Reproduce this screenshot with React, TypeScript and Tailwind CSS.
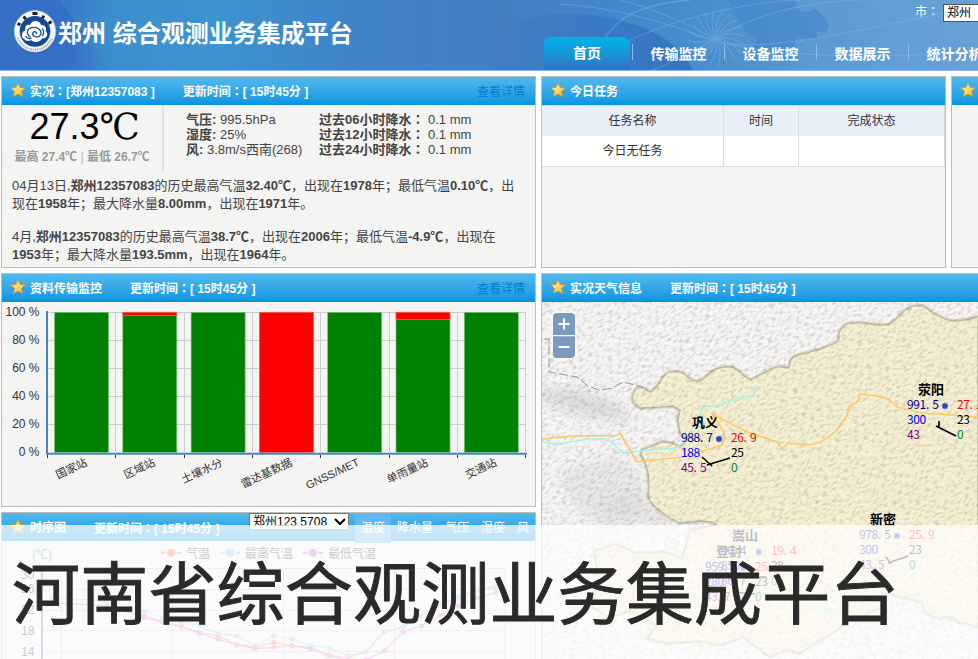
import React from "react";

const SANS = "font-['Liberation_Sans','Noto_Sans_CJK_SC',sans-serif]";

function Star() {
  return (
    <svg width="16" height="16" viewBox="0 0 16 16" className="shrink-0">
      <defs>
        <linearGradient id="star" x1="0" y1="0" x2="0.6" y2="1">
          <stop offset="0" stopColor="#fff2a8" />
          <stop offset="1" stopColor="#f5c544" />
        </linearGradient>
      </defs>
      <path
        d="M8 0.8 L10.2 5.5 L15.3 6 L11.5 9.4 L12.7 14.5 L8 12 L3.3 14.5 L4.5 9.4 L0.7 6 L5.8 5.5 Z"
        fill="url(#star)"
        stroke="#d09a35"
        strokeWidth="1"
        strokeLinejoin="round"
      />
    </svg>
  );
}

function Logo() {
  return (
    <svg width="44" height="46" viewBox="0 0 44 46" className="shrink-0">
      <circle cx="22.5" cy="24" r="20.6" fill="#1d4f9c" opacity="0.45" />
      <circle cx="22" cy="22.3" r="20.7" fill="#f4f6f6" stroke="#b9c9d4" strokeWidth="0.8" />
      <path d="M5 29 A18.2 18.2 0 0 0 39 29" fill="none" stroke="#6b7280" strokeWidth="2" strokeDasharray="1.2 1" opacity="0.6" />
      <g fill="none" stroke="#1a1f28" strokeWidth="2.8">
        <path d="M4.5 14.5 l3 1.5 M10.5 7.5 l2.4 2.6 M19.5 4.5 h5 M31 6.8 l-2 3 M38.5 12.5 l-3 2" />
      </g>
      <circle cx="22" cy="22.3" r="15.4" fill="#134a9b" />
      <path
        d="M11 30 C7.5 28 8.5 22 12.5 21.5 C11.5 17 14 15 17 16 C18.5 10.5 27 10.5 28 16 C33 15.5 34 20 32.5 22 C36 24.5 34 30 29 29.5 C27.5 33.5 20.5 34 18 31 C15.5 32.5 13 32 11 30 Z"
        fill="#fff"
      />
      <path
        d="M17 28 C12 24 15 18 21 18.3 C27 18.5 30 24 26.5 27 C23.5 29.5 18.5 27 20 23.7 C21 22 24 22.6 23.5 24.6 M13 27.5 C14 29 16 29.8 18 29.5 M29.5 20 C31 21.5 31 25 29.5 26.8"
        fill="none" stroke="#134a9b" strokeWidth="1.3" strokeLinecap="round"
      />
    </svg>
  );
}

function HeaderArt() {
  const rays = [0, 18, 36, 54, 72, 90, 108, 126, 144, 162, 180, 198, 216, 234, 252, 270, 288, 306, 324, 342];
  return (
    <svg width="978" height="70" viewBox="0 0 978 70" className="absolute inset-0">
      <defs>
        <linearGradient id="hd" x1="0" x2="1">
          <stop offset="0" stopColor="#3471c5" />
          <stop offset="0.07" stopColor="#3470c6" />
          <stop offset="0.11" stopColor="#3a8acb" />
          <stop offset="0.22" stopColor="#3d94cf" />
          <stop offset="0.38" stopColor="#3f82c5" />
          <stop offset="0.52" stopColor="#4280c2" />
          <stop offset="0.65" stopColor="#4289cb" />
          <stop offset="0.82" stopColor="#5497d0" />
          <stop offset="1" stopColor="#659fd4" />
        </linearGradient>
        <linearGradient id="globe" x1="480" x2="693" gradientUnits="userSpaceOnUse">
          <stop offset="0" stopColor="#2865b8" stopOpacity="0" />
          <stop offset="1" stopColor="#2865b8" stopOpacity="0.62" />
        </linearGradient>
      </defs>
      <rect width="978" height="70" fill="url(#hd)" />
      <path d="M60 0 L110 70 L230 70 L140 0 Z" fill="#3e97d2" opacity="0.3" />
      <path d="M480 40 C520 14 560 10 600 16 C650 24 680 44 693 70 L480 70 Z" fill="url(#globe)" />
      <path
        d="M795 0 L796 10 L808 12 L816 9 L824 18 L829 26 L826 33 L817 31 L817 38 L803 40 L797 36 L795 46 L784 48 L786 58 L776 60 L770 50 L759 58 L752 48 L758 39 L748 34 L727 0 Z"
        fill="#377bc8" opacity="0.32"
      />
      <path d="M797 38 L790 70 L978 70 L978 0 L797 0 L800 11 L808 12 L816 9 L824 18 L829 26 L826 33 L817 31 L817 38 L803 40 Z" fill="#7ab0dd" opacity="0.16" />
      <g stroke="#9ccbeb" fill="none" opacity="0.3">
        <path d="M590 70 C606 20 632 5 690 0" strokeWidth="1.3" />
        <path d="M560 4 C620 8 670 24 712 40 S860 30 978 6" />
        <path d="M620 0 C660 10 700 30 716 40 C760 55 850 60 978 52" />
        <path d="M600 58 C650 20 760 0 800 0 M716 40 C690 50 660 70 650 70 M716 40 C760 5 850 -2 880 0" />
        {rays.map((a) => (
          <path key={a} d="M716 38 q14 -7 28 -2" transform={`rotate(${a} 716 38)`} />
        ))}
      </g>
    </svg>
  );
}

function TitleBar({ title, time, gap, link }: { title: string; time?: string; gap?: string; link?: boolean }) {
  return (
    <div className="flex h-7 shrink-0 items-center bg-linear-to-b from-[#50b9ee] to-[#0095df] pl-2 pr-[10px] font-['Liberation_Sans','Noto_Sans_CJK_SC',sans-serif] text-[12px] font-bold whitespace-pre text-white">
      <span className="-mt-[2px]"><Star /></span>
      <span className="ml-1 pt-px">{colon(title)}</span>
      {time && <span className={`${gap} pt-px`}>{colon(time)}</span>}
      {link && <span className="ml-auto pt-px font-normal text-[#007fd0]">查看详情</span>}
    </div>
  );
}

// Sets the full-width colon centred in its cell.
function colon(text: string) {
  const [a, b] = text.split("：");
  if (b === undefined) return text;
  return <>{a}<span lang="zh-TW" className="font-['Noto_Sans_CJK_TC',sans-serif]">：</span>{b}</>;
}

const PANEL = "flex flex-col overflow-hidden border border-[#bcbcb8] bg-[#f4f4f2]";

const NAV = ["传输监控", "设备监控", "数据展示", "统计分析"];

const BARS = [
  { label: "国家站", red: 0, x: 88 },
  { label: "区域站", red: 3, x: 156 },
  { label: "土壤水分", red: 0, x: 223.5 },
  { label: "雷达基数据", red: 141, x: 293 },
  { label: "GNSS/MET", red: 0, x: 360 },
  { label: "单雨量站", red: 7, x: 429 },
  { label: "交通站", red: 0, x: 497.5 },
];

function BarChart() {
  return (
    <svg width="533" height="204" viewBox="2 302 533 204" className="font-['Liberation_Sans','Noto_Sans_CJK_SC',sans-serif]">
      <g stroke="#ccc" shapeRendering="crispEdges">
        {[0, 1, 2, 3, 4].map((i) => (
          <path key={i} d={`M48 ${312.5 + i * 28} H526`} />
        ))}
        {[1, 2, 3, 4, 5, 6, 7].map((i) => (
          <path key={i} d={`M${Math.round(47 + i * 68.3) + 0.5} 312 V452`} />
        ))}
      </g>
      {BARS.map((b, i) => {
        const x = 54.5 + i * 68.3;
        return (
          <g key={b.label}>
            <rect x={x} y="312.3" width="54" height="140" fill="#008000" stroke="#7fc07f" strokeWidth="0.7" />
            {b.red > 0 && <rect x={x} y="312.3" width="54" height={Math.min(b.red, 140)} fill="#f00" stroke="#f66" strokeWidth="0.7" />}
          </g>
        );
      })}
      <path d="M47 311 V454 M46 453.8 H527" stroke="#4488bb" strokeWidth="2" />
      <g stroke="#333" shapeRendering="crispEdges">
        {[0, 1, 2, 3, 4, 5, 6, 7].map((i) => (
          <path key={i} d={`M${Math.round(47 + i * 68.3) + 0.5} 455 v3`} />
        ))}
      </g>
      {[100, 80, 60, 40, 20, 0].map((v, i) => (
        <text key={v} x="39.5" y={316 + i * 28} textAnchor="end" fontSize="12" fill="#333">{v} %</text>
      ))}
      {BARS.map((b) => (
        <text key={b.label} x={b.x} y="465" textAnchor="end" fontSize="11" fill="#333" transform={`rotate(-25 ${b.x} 465)`}>{b.label}</text>
      ))}
    </svg>
  );
}

const MAXT = [597.7, 599, 600, 602, 605, 611, 618, 622, 626, 633.3, 635.7, 645.7, 635.7, 639, 645.7, 647.7, 655.7, 651.7, 631.3, 626.7, 615, 604.3, 596.7, 590, 585.7, 583.3, 584];
const MINT = [603.3, 604, 605, 606, 611.7, 617.7, 622.3, 626.7, 633.3, 639.3, 645, 648.7, 647.3, 645.7, 649, 655.7, 660, 660, 650.7, 631.7, 626, 615, 606, 598, 592.5, 589, 585.7];
const AVGT = [603, 603.5, 604.5, 605.5, 611, 616, 621, 626, 633, 635.7, 644.7, 647, 642.7, 645.7, 647.7, 655, 658, 652, 631.7, 627, 615.5, 605, 597.5, 591, 587, 584.7, 584.3];

function Series({ data, color }: { data: number[]; color: string }) {
  const x = (i: number) => 51.6 + i * 18.5;
  const pts = data.slice(0, 25).map((y, i) => [x(i), y] as const);
  return (
    <g stroke={color} fill="none">
      <polyline points={pts.map((p) => p.join(",")).join(" ")} strokeWidth="1.2" />
      {pts.filter((_, i) => i % 3 === 0 || i > 4).map(([px, py]) => (
        <circle key={px} cx={px} cy={py} r="2.1" fill={color} />
      ))}
    </g>
  );
}

function TempChart() {
  const legend: [string, number, string][] = [["气温", 161, "#ff6b35"], ["最高气温", 220, "#7cc4f5"], ["最低气温", 303, "#cf4fc5"]];
  return (
    <svg width="533" height="118" viewBox="2 541 533 118" className="font-['Liberation_Sans','Noto_Sans_CJK_SC',sans-serif]">
      <g stroke="#ccc" shapeRendering="crispEdges">
        {[568.5, 589.5, 610.5, 630.5, 651.5].map((y) => <path key={y} d={`M42 ${y} H505`} />)}
        {[61.5, 172.5, 283.5, 394.5, 505.5].map((x) => <path key={x} d={`M${x} 568 V659`} />)}
      </g>
      <path d="M42 568 V659" stroke="#4488bb" strokeWidth="2" />
      <text x="32" y="559" fontSize="12" fill="#4488bb">(℃)</text>
      {[["30", 579], ["26", 593], ["22", 614], ["18", 635], ["14", 656]].map(([t, y]) => (
        <text key={t} x="34.5" y={y} fontSize="12" textAnchor="end" fill="#333">{t}</text>
      ))}
      <Series data={AVGT} color="#ff7f50" />
      <Series data={MAXT} color="#87cefa" />
      <Series data={MINT} color="#da70d6" />
      {legend.map(([t, x, c]) => (
        <g key={t}>
          <path d={`M${x} 552.7 h20`} stroke={c} strokeWidth="2" />
          <circle cx={x + 10} cy="552.7" r="5.5" fill="#f4f4f2" />
          <circle cx={x + 10} cy="552.7" r="4" fill={c} />
          <text x={x + 25} y="558" fontSize="12" fill="#333">{t}</text>
        </g>
      ))}
    </svg>
  );
}

function Num({ x, y, t, c }: { x: number; y: number; t: string; c: string }) {
  const xs = t.split("").map((_, i) => x + i * 6.3).join(" ");
  return <text x={xs} y={y} fontSize="12" fill={c}>{t}</text>;
}

function Station(p: { x: number; y: number; name: string; v: string[]; barb: string }) {
  const { x, y, v } = p;
  return (
    <g>
      <text x={x + 11} y={y - 11} fontSize="13" fontWeight="bold" fill="#000">{p.name}</text>
      <Num x={x} y={y + 4} t={v[0]} c="#000080" />
      <Num x={x} y={y + 19} t={v[1]} c="#0000ff" />
      <Num x={x} y={y + 34} t={v[2]} c="#800080" />
      <circle cx={x + 38} cy={y + 1} r="3" fill="#3344bb" stroke="#8a92d8" strokeWidth="0.8" />
      <Num x={x + 50} y={y + 4} t={v[3]} c="#ff0000" />
      <Num x={x + 50} y={y + 19} t={v[4]} c="#000" />
      <Num x={x + 50} y={y + 34} t={v[5]} c="#008040" />
      <path d={p.barb} stroke="#000" strokeWidth="1.6" fill="none" />
    </g>
  );
}

const REGION =
  "M633 402 Q631 394 637 388 Q641 387 645 389 Q650 394 653 390 Q658 386 663 377 Q668 371 673 371.7 Q680 371 684 374 Q692 381 697 381.7 Q703 380 708 375 Q714 369 720 368 Q728 366 733 367.7 Q740 371 743 375 L750 380 Q756 378 760 375 L770 370 Q777 366 782 367 L788 368 Q791 365 790 361 L794 356.7 Q804 354 813 351 Q823 349 830 345 Q839 343 839 338 Q838 332 842 328 Q845 324 850 323.3 Q860 322 870 324 Q882 326 890 324.3 Q897 319 903 312 Q910 306 917 305.7 Q923 305 927 308.3 Q934 315 940 316.7 Q948 321 957 321 Q968 320 978 316.7 V627 L969 624 L960 623 L950 616 L940 618 L925 613 L922 602 L900 597 L883 592 L880 608 L860 617 L846 621 L837 630 L815 643 L800 653 L785 650 L770 657 L750 642 L743 637 L720 645 L700 641 L670 643 L647 639 L657 626 L630 610 L610 618 L593 607 L598 580 L595 550 L602 550 L613 544 L630 550 L633 553 L663 552 L682 558 L688 540 L690 530 L717 525 L712 522 L700 521 L680 523 L670 518 L663 513 L653 505 L648 497 Q650 484 648 473 L645 462 L641 455 L642 450 L652 446 L663 441.7 L672 443 L680 447 L688 440 L680 433 L678 420 L680 410 L673 406 L660 407 L640 408 Z";

function WeatherMap() {
  return (
    <svg width="436" height="357" viewBox="542 302 436 357" className="font-['Noto_Sans_CJK_SC','Noto_Sans',sans-serif]">
      <defs>
        <filter id="relief" x="0" y="0" width="100%" height="100%" colorInterpolationFilters="sRGB">
          <feTurbulence type="fractalNoise" baseFrequency="0.2 0.42" numOctaves="3" seed="7" result="n" />
          <feColorMatrix type="matrix" values="0 0 0 0 0.42  0 0 0 0 0.42  0 0 0 0 0.4  3.2 0 0 0 -1.45" />
        </filter>
        <filter id="soft"><feGaussianBlur stdDeviation="6" /></filter>
        <clipPath id="mapArea"><rect x="542" y="302" width="436" height="357" /></clipPath>
      </defs>
      <rect x="542" y="302" width="436" height="357" fill="#f6f5f4" />
      <g filter="url(#soft)" fill="#b8b8b6" opacity="0.4">
        <path d="M542 388 L580 390 L625 408 L632 420 L590 416 L542 402 Z" />
        <path d="M560 470 L610 458 L640 470 L640 510 L590 520 L570 500 Z" opacity="0.5" />
        <path d="M600 500 L645 490 L680 524 L600 530 Z" opacity="0.6" />
      </g>
      <path d={REGION} fill="none" stroke="#d9d6cd" strokeWidth="4" strokeLinejoin="round" />
      <path d={REGION} fill="#f6f0d3" stroke="#c2bb98" strokeWidth="1.3" strokeLinejoin="round" />
      <g clipPath="url(#mapArea)" opacity="0.25">
        <g transform="rotate(-32 760 480)">
          <rect x="460" y="180" width="600" height="600" filter="url(#relief)" />
        </g>
      </g>
      <path d="M544 339 H549 V372 L577 377 L588 386 L600 390.5 L612 388 L623 382 L643 387" fill="none" stroke="#999" strokeDasharray="9 3" />
      <path
        d="M542 442 L557 444.5 L587 439 L607 439 L615 445 L623 453 L650 450 L675 448 L690 438 L698 425 L703 406 L717 406 L740 397 L753 396 L756 385 M720 580 L800 604 L830 610 L860 625 L875 659"
        fill="none" stroke="#a4f1e8" strokeWidth="1.4"
      />
      <path
        d="M542 439 L573 436 L617 435.5 L620 433 L637 462 L683 457 L722 445 Q726 437 722 429 L712 414 L745 431 L765 438 L777 442 L782 449 L788 443 L808 445 Q820 444 830 436 Q841 427 847 415 L849 407 L858 401 L859 394 Q875 395 888 399 L897 407 L923 413 L978 417"
        fill="none" stroke="#fcca62" strokeWidth="1.6" strokeLinejoin="round"
      />
      <rect x="551" y="311" width="26" height="48" rx="4" fill="#fff" opacity="0.5" />
      <path d="M553 335 V317 Q553 313 557 313 H571 Q575 313 575 317 V335 Z M553 336.2 V354 Q553 358 557 358 H571 Q575 358 575 354 V336.2 Z" fill="#7b98be" />
      <path d="M558.5 324 H569.5 M564 318.5 V329.5 M558.5 347 H569.5" stroke="#fff" strokeWidth="2" />
      <Station x={681} y={438} name="巩义" v={["988.7", "188", "45.5", "26.9", "25", "0"]} barb="M702 457 L712 466 M707 465 L730 458" />
      <Station x={907} y={405} name="荥阳" v={["991.5", "300", "43", "27.1", "23", "0"]} barb="M939 421 V428 M936 426 L956 436" />
      <Station x={859} y={535} name="新密" v={["978.5", "300", "43.5", "25.9", "23", "0"]} barb="M886 557 L891 564 M888 563 L908 556" />
      <Station x={721} y={551} name="嵩山" v={["90.4", "850", "86.7", "19.4", "28", "0"]} barb="M745 578 L766 577" />
      <Station x={705} y={567} name="登封" v={["959.8", "280", "43.7", "25.2", "23", "0"]} barb="M732 592 L755 594" />
    </svg>
  );
}

export default function App() {
  return (
    <div className={`relative flex h-[659px] w-[978px] flex-col overflow-hidden bg-white ${SANS}`}>
      <header className="relative h-[71px] shrink-0 border-b border-[#82b5f2]">
        <HeaderArt />
        <div className="relative flex h-[70px] pl-[13px]">
          <div className="flex w-[531px] items-start pt-[9px]">
            <Logo />
            <h1 className="mt-px ml-[1px] text-[24px] leading-[48px] font-bold whitespace-pre text-white">郑州 综合观测业务集成平台</h1>
          </div>
          <div className="flex w-[434px] flex-col">
            <div className="flex h-[37px] items-start pt-[3px] pl-[371px] text-[12px] text-white">
              <span className="w-7 shrink-0 leading-4">市<span lang="zh-TW" className="font-['Noto_Sans_CJK_TC',sans-serif]">：</span></span>
              <span className="mt-px h-[18px] w-[60px] shrink-0 border border-[#555] bg-white pl-[3px] leading-[17px] text-black">郑州</span>
            </div>
            <nav className="flex h-[33px] text-[14px] font-bold whitespace-nowrap text-white">
              <span className="mr-[2px] w-[86px] shrink-0 rounded-t-[7px] bg-linear-to-b from-[#00b2e8] via-[#1497d9] to-[#2f6fc0] text-center leading-[32px]">首页</span>
              {NAV.map((n) => (
                <span key={n} className="flex w-[92px] shrink-0 items-center">
                  <i className="-mt-[3px] h-4 w-px bg-[#8dbcf0]" />
                  <span className="w-[91px] text-center leading-[32px]">{n}</span>
                </span>
              ))}
            </nav>
          </div>
        </div>
      </header>

      <main className="flex pt-[5px] pl-px">
        <div className="flex w-[535px] shrink-0 flex-col">
          <section className={`${PANEL} h-[192px]`}>
            <TitleBar title="实况：[郑州12357083 ]" time="更新时间：[ 15时45分 ]" gap="ml-7" link />
            <div className="flex h-[67px] text-[13px] leading-[15px] whitespace-pre text-[#444]">
              <div className="w-[162px] shrink-0 border-r-2 border-[#e2e2e2] text-center">
                <div className="flex h-[43px] items-center justify-center text-[36px] leading-[46px] text-black">
                  27.3<span className="w-[35px] text-center font-['Liberation_Serif','DejaVu_Serif',serif] text-[36px]">℃</span>
                </div>
                <div className="text-[12px] leading-[18px] font-bold text-[#999]">最高 27.4℃ <span className="font-normal text-[#9ab8e0]">|</span> 最低 26.7℃</div>
              </div>
              <div className="w-[133px] shrink-0 pt-[7px] pl-[22px]">
                <p><b>气压:</b> 995.5hPa</p>
                <p><b>湿度:</b> 25%</p>
                <p><b>风:</b> 3.8m/s西南(268)</p>
              </div>
              <div className="pt-[7px] pl-[22px]">
                {["06", "12", "24"].map((h) => (
                  <p key={h} className="flex"><b className="w-[109px]">过去{h}小时降水<span lang="zh-TW" className="font-['Noto_Sans_CJK_TC',sans-serif] leading-[0]">：</span></b>0.1 mm</p>
                ))}
              </div>
            </div>
            <div className="pt-[5px] pl-[10px] text-[13px] leading-[18px] whitespace-nowrap text-[#444]">
              <p>04月13日,<b>郑州12357083</b>的历史最高气温<b>32.40℃</b>，出现在<b>1978</b>年；最低气温<b>0.10℃</b>，出<br />现在<b>1958</b>年；最大降水量<b>8.00mm</b>，出现在<b>1971</b>年。</p>
              <p className="mt-[15px]">4月,<b>郑州12357083</b>的历史最高气温<b>38.7℃</b>，出现在<b>2006</b>年；最低气温<b>-4.9℃</b>，出现在<br /><b>1953</b>年；最大降水量<b>193.5mm</b>，出现在<b>1964</b>年。</p>
            </div>
          </section>

          <section className={`${PANEL} mt-[5px] h-[234px]`}>
            <TitleBar title="资料传输监控" time="更新时间：[ 15时45分 ]" gap="ml-7" link />
            <BarChart />
          </section>

          <section className={`${PANEL} mt-[5px] h-[148px]`}>
            <div className="flex h-7 shrink-0 items-start bg-linear-to-b from-[#50b9ee] to-[#0095df] pl-2 text-[12px] leading-[30px] whitespace-pre text-white">
              <span className="pt-[6px]"><Star /></span>
              <b className="ml-1 w-16">时序图</b>
              <b className="w-[155px]">{colon("更新时间：[ 15时45分 ]")}</b>
              <span className="flex h-[17px] w-[100px] shrink-0 items-center border border-[#777] bg-white pl-[3px] leading-4 text-black">
                郑州123 5708
                <svg width="12" height="8" viewBox="0 0 12 8" className="ml-[7px]"><path d="M1 1 L6 6 L11 1" fill="none" stroke="#000" strokeWidth="2" /></svg>
              </span>
              <span className="ml-[6px] w-9 bg-[#62b8f2] text-center">温度</span>
              <span className="ml-[6px] w-12">降水量</span>
              <span className="w-9">气压</span>
              <span className="w-9">湿度</span>
              <span>风</span>
            </div>
            <TempChart />
          </section>
        </div>

        <div className="ml-[5px] flex w-[437px] shrink-0 flex-col">
          <div className="flex gap-[5px]">
            <section className={`${PANEL} h-[192px] w-[405px] shrink-0`}>
              <TitleBar title="今日任务" />
              <div className="grid grid-cols-[182px_75px_146px] border-t border-[#d6d9e0] text-center text-[12px] text-[#333]">
                {["任务名称", "时间", "完成状态"].map((t) => (
                  <div key={t} className="h-[30px] border-r border-[#d9dbe2] bg-[#e8eff9] leading-[30px]">{t}</div>
                ))}
                {["今日无任务", "", ""].map((t, i) => (
                  <div key={i} className="h-[31px] border-r border-b border-[#d9dbe2] bg-white leading-[30px]">{t}</div>
                ))}
              </div>
            </section>
            <section className={`${PANEL} h-[192px] w-[60px] shrink-0`}>
              <TitleBar title="" />
            </section>
          </div>
          <section className={`${PANEL} mt-[5px] h-[387px] w-[480px]`}>
            <TitleBar title="实况天气信息" time="更新时间：[ 15时45分 ]" gap="ml-7" />
            <WeatherMap />
          </section>
        </div>
      </main>

      {/* caption band laid over the dashboard */}
      <div className="absolute inset-x-0 bottom-0 h-[134px] bg-[#fdfdfd]/75 pl-[12px]">
        <div className="pt-[15px] font-['Noto_Sans_CJK_SC',sans-serif] text-[68px] leading-[100px] tracking-[0.2px] whitespace-nowrap text-[#2a2a2a] [-webkit-text-stroke:0.9px_#2a2a2a]">河南省综合观测业务集成平台</div>
      </div>
    </div>
  );
}
